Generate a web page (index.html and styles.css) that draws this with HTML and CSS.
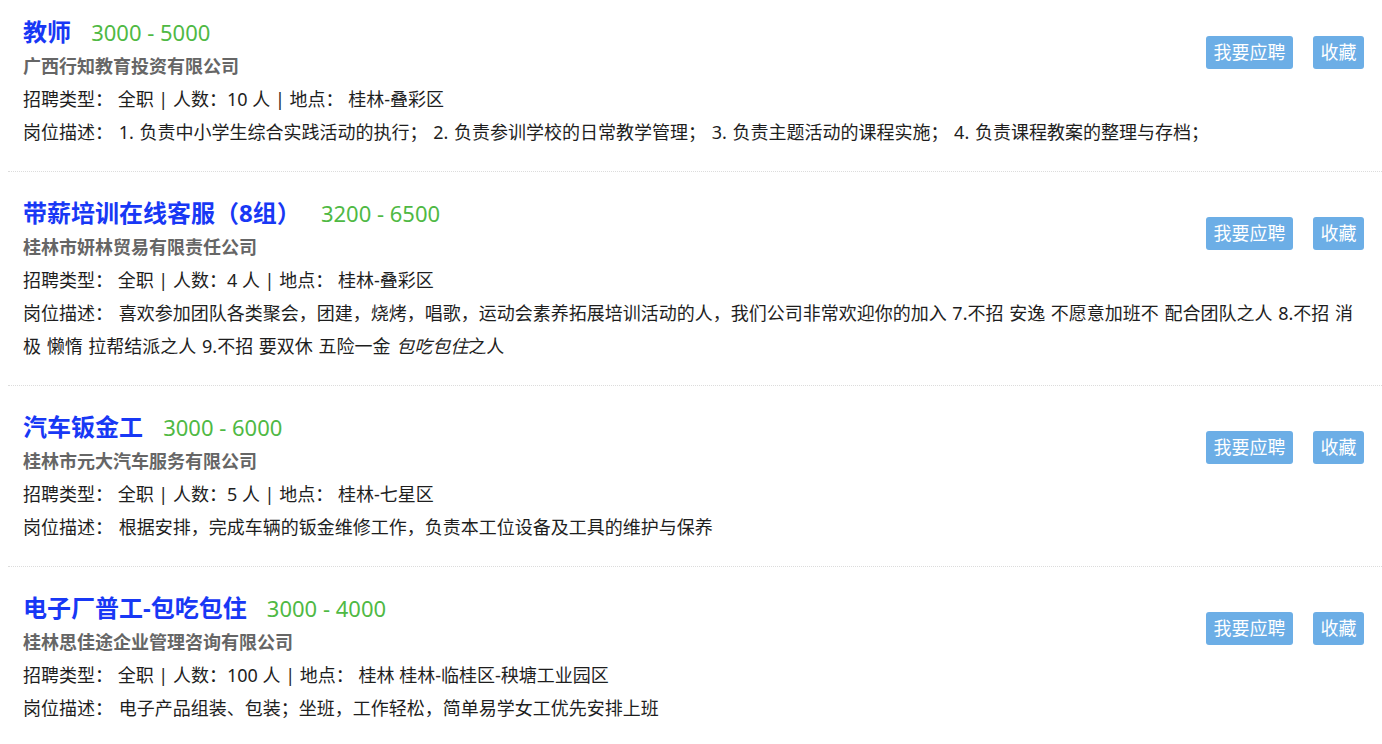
FILE: index.html
```html
<!DOCTYPE html>
<html lang="zh-CN">
<head>
    <meta charset="UTF-8">
    <meta name="viewport" content="width=device-width, initial-scale=1.0">
    <title>招聘信息</title>
    <link rel="stylesheet" href="styles.css">
</head>
<body>
    <div class="job-list">
        <div class="job">
            <div class="job-actions">
                <a class="btn" href="#">我要应聘</a>
                <a class="btn" href="#">收藏</a>
            </div>
            <div class="job-title">
                <a class="job-name" href="#">教师</a>
                <span class="salary">3000 - 5000</span>
            </div>
            <div class="company">广西行知教育投资有限公司</div>
            <div class="job-line">招聘类型： 全职 | 人数：10 人 | 地点： 桂林-叠彩区</div>
            <div class="job-line job-desc">岗位描述： 1. 负责中小学生综合实践活动的执行； 2. 负责参训学校的日常教学管理； 3. 负责主题活动的课程实施； 4. 负责课程教案的整理与存档；</div>
        </div>

        <div class="job">
            <div class="job-actions">
                <a class="btn" href="#">我要应聘</a>
                <a class="btn" href="#">收藏</a>
            </div>
            <div class="job-title">
                <a class="job-name" href="#">带薪培训在线客服（8组）</a>
                <span class="salary">3200 - 6500</span>
            </div>
            <div class="company">桂林市妍林贸易有限责任公司</div>
            <div class="job-line">招聘类型： 全职 | 人数：4 人 | 地点： 桂林-叠彩区</div>
            <div class="job-line job-desc">岗位描述： 喜欢参加团队各类聚会，团建，烧烤，唱歌，运动会素养拓展培训活动的人，我们公司非常欢迎你的加入 7.不招 安逸 不愿意加班不 配合团队之人 8.不招 消极 懒惰 拉帮结派之人 9.不招 要双休 五险一金 <em>包吃包住</em>之人</div>
        </div>

        <div class="job">
            <div class="job-actions">
                <a class="btn" href="#">我要应聘</a>
                <a class="btn" href="#">收藏</a>
            </div>
            <div class="job-title">
                <a class="job-name" href="#">汽车钣金工</a>
                <span class="salary">3000 - 6000</span>
            </div>
            <div class="company">桂林市元大汽车服务有限公司</div>
            <div class="job-line">招聘类型： 全职 | 人数：5 人 | 地点： 桂林-七星区</div>
            <div class="job-line job-desc">岗位描述： 根据安排，完成车辆的钣金维修工作，负责本工位设备及工具的维护与保养</div>
        </div>

        <div class="job">
            <div class="job-actions">
                <a class="btn" href="#">我要应聘</a>
                <a class="btn" href="#">收藏</a>
            </div>
            <div class="job-title">
                <a class="job-name" href="#">电子厂普工-包吃包住</a>
                <span class="salary">3000 - 4000</span>
            </div>
            <div class="company">桂林思佳途企业管理咨询有限公司</div>
            <div class="job-line">招聘类型： 全职 | 人数：100 人 | 地点： 桂林 桂林-临桂区-秧塘工业园区</div>
            <div class="job-line job-desc">岗位描述： 电子产品组装、包装；坐班，工作轻松，简单易学女工优先安排上班</div>
        </div>
    </div>
</body>
</html>
```

FILE: styles.css
```css
html, body {
    margin: 0;
    padding: 0;
    background-color: #fff;
    font-family: "Noto Sans", "Noto Sans CJK SC", sans-serif;
    color: #1e1e1e;
}

.job-list {
    margin-top: -9px;
    margin-left: 8px;
}

.job {
    padding: 23px 18px 22px 15px;
    border-bottom: 1px dotted #dcdcdc;
}

.job:after {
    content: "";
    display: block;
    clear: both;
}

.job-actions {
    float: right;
    margin-top: 22px;
    display: flex;
    gap: 20px;
}

.btn {
    display: block;
    height: 33px;
    line-height: 33px;
    padding: 0 7.5px;
    font-size: 18px;
    color: #fff;
    background-color: #6caee6;
    border-radius: 3px;
    text-decoration: none;
}

.job-title {
    height: 36px;
    line-height: 36px;
    white-space: nowrap;
}

.job-name {
    font-size: 24px;
    font-weight: bold;
    color: #1838f5;
    text-decoration: none;
}

.salary {
    margin-left: 16px;
    font-size: 22px;
    color: #4fb944;
}

.company {
    font-size: 18px;
    line-height: 33px;
    font-weight: bold;
    color: #666;
}

.job-line {
    font-size: 18px;
    line-height: 33px;
}

.job-desc {
    word-spacing: 1px;
}

.job-line em {
    font-style: italic;
}
```
